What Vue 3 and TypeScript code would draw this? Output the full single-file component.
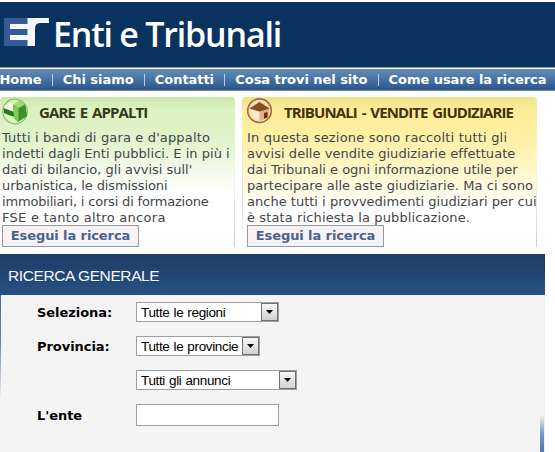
<script setup lang="ts">
interface Line {
  text: string
  tracking: number
}

interface Card {
  kind: 'green' | 'yellow'
  title: string
  lines: Line[]
}

const menu: string[] = ['Home', 'Chi siamo', 'Contatti', 'Cosa trovi nel sito', 'Come usare la ricerca']

const cards: Card[] = [
  {
    kind: 'green',
    title: 'GARE E APPALTI',
    lines: [
      { text: "Tutti i bandi di gara e d'appalto", tracking: 0.15 },
      { text: 'indetti dagli Enti pubblici. E in più i', tracking: 0.03 },
      { text: "dati di bilancio, gli avvisi sull'", tracking: -0.01 },
      { text: 'urbanistica, le dismissioni', tracking: -0.1 },
      { text: 'immobiliari, i corsi di formazione', tracking: -0.18 },
      { text: 'FSE e tanto altro ancora', tracking: 0.28 },
    ],
  },
  {
    kind: 'yellow',
    title: 'TRIBUNALI - VENDITE GIUDIZIARIE',
    lines: [
      { text: 'In questa sezione sono raccolti tutti gli', tracking: 0.2 },
      { text: 'avvisi delle vendite giudiziarie effettuate', tracking: 0.05 },
      { text: 'dai Tribunali e ogni informazione utile per', tracking: 0 },
      { text: 'partecipare alle aste giudiziarie. Ma ci sono', tracking: 0.07 },
      { text: 'anche tutti i provvedimenti giudiziari per cui', tracking: 0.01 },
      { text: 'è stata richiesta la pubblicazione.', tracking: 0.12 },
    ],
  },
]

const fields = [
  { label: 'Seleziona:', value: 'Tutte le regioni', size: 'medium' },
  { label: 'Provincia:', value: 'Tutte le provincie', size: 'small' },
  { label: '', value: 'Tutti gli annunci', size: 'large' },
]
</script>

<template>
  <div class="page">
    <header class="header">
      <svg class="logo" width="46" height="30" viewBox="0 0 46 30">
        <rect x="0" y="0" width="24" height="28" fill="#345b94" />
        <path d="M6 6H23.5V0H45V5H36Q31 5 31 11V28H23.5V22H6V17H23.5V11H6Z" fill="#f3f6fa" />
      </svg>
      <h1 class="brand">Enti e Tribunali</h1>
    </header>

    <nav class="nav">
      <template v-for="(item, i) in menu" :key="item">
        <span v-if="i" class="sep"></span>
        <a class="link">{{ item }}</a>
      </template>
    </nav>

    <section class="cards">
      <article v-for="card in cards" :key="card.title" class="card" :class="card.kind">
        <div class="head">
          <svg v-if="card.kind === 'green'" class="icon" width="27" height="28" viewBox="0 0 27 28">
            <circle cx="13" cy="13.5" r="12.3" fill="#d9f3b8" stroke="#8db779" stroke-width="1.2" />
            <path d="M1.5 10L11 13L14 19L9 18L2 15Z" fill="#267b22" />
            <path d="M3 7L9 5L14 9L12 14L2 10Z" fill="#f1fbdc" />
            <path d="M11 7L17 3L23 6L25 18L16 24L12 20Z" fill="#5eae3d" />
            <path d="M11 7L17 3L23 6L17 10Z" fill="#a1dc75" />
            <path d="M17 10L23 7L25 18L17 23Z" fill="#389129" />
            <path d="M12 8L16 10V23L12 20Z" fill="#83c95a" />
          </svg>
          <svg v-else class="icon" width="27" height="28" viewBox="0 0 27 28">
            <circle cx="12.5" cy="12.7" r="11.8" fill="#f6dfb4" stroke="#a4673b" stroke-width="1.6" />
            <path d="M4 10L13 13V23L4.5 20Z" fill="#f9e8cc" />
            <path d="M12.5 13L22 9.5V19.5L12.5 23Z" fill="#dfb282" />
            <path d="M2.5 10.5L12.5 4L22.8 10.5L12.5 13.6Z" fill="#8d4b21" />
            <path d="M17 15L20.5 14V19.5L17 20.8Z" fill="#6b3011" />
          </svg>
          <h2 class="title">{{ card.title }}</h2>
        </div>
        <p class="text">
          <span
            v-for="line in card.lines"
            :key="line.text"
            class="line"
            :style="{ letterSpacing: line.tracking + 'px' }"
          >{{ line.text }}</span>
        </p>
        <button class="go" type="button">Esegui la ricerca</button>
      </article>
    </section>

    <section class="search">
      <h2 class="bar">RICERCA GENERALE</h2>
      <form class="form">
        <div v-for="field in fields" :key="field.value" class="row">
          <span class="label">{{ field.label }}</span>
          <div class="select" :class="field.size">
            <span class="value">{{ field.value }}</span>
            <span class="arrow">
              <svg width="7" height="4" viewBox="0 0 7 4"><path d="M0 0H7L3.5 4Z" fill="#000" /></svg>
            </span>
          </div>
        </div>
        <div class="row last">
          <label class="label" for="ente">L'ente</label>
          <input id="ente" class="input" type="text" />
        </div>
      </form>
    </section>
  </div>
</template>

<style>
body {
  background: #fff;
  overflow: hidden;
}
</style>

<style scoped>
.page {
  box-sizing: border-box;
  width: 555px;
  height: 452px;
  padding-top: 2px;
  overflow: hidden;
  font-family: "DejaVu Sans", sans-serif;
  font-size: 13px;
}
h1, h2, p {
  margin: 0;
}
.header {
  display: flex;
  height: 65px;
  background: #0a325f;
}
.logo {
  flex: none;
  margin: 16px 0 0 4px;
}
.brand {
  margin: 9px 0 0 3px;
  color: #fff;
  font: 600 34px/46px "Open Sans", sans-serif;
  letter-spacing: -1.2px;
  white-space: nowrap;
}
.nav {
  display: flex;
  align-items: center;
  box-sizing: border-box;
  height: 24px;
  padding-top: 1px;
  border-top: 1px solid #8c9299;
  border-bottom: 1px solid #7b8796;
  background: linear-gradient(#fff 0 1px, #648ab8 1px, #527dac 35%, #2b5489);
}
.link {
  margin-left: -0.5px;
  color: #fff;
  font-weight: bold;
  letter-spacing: -0.05px;
  line-height: 20px;
  white-space: nowrap;
}
.sep {
  width: 1px;
  height: 12px;
  margin: 0 10.4px;
  background: #b9cbe0;
}
.cards {
  display: flex;
  gap: 7px;
  height: 150px;
  padding-top: 6px;
}
.card {
  box-sizing: border-box;
  padding-left: 2px;
  border-radius: 4px 4px 0 0;
  white-space: nowrap;
}
.green {
  width: 235px;
  background:
    linear-gradient(transparent 45%, #c9ced8) right / 1px 100% no-repeat,
    linear-gradient(#c9e8ab, #dcf2c0 8%, #e0f3ca 28%, #f3fae9 48%, #fff 64%);
}
.yellow {
  width: 295px;
  padding-left: 5px;
  background:
    linear-gradient(transparent 45%, #c9ced8) right / 1px 100% no-repeat,
    linear-gradient(transparent 20%, #d4d8e2 70%, transparent) left / 1px 100% no-repeat,
    linear-gradient(#f0e28c, #fdec97 8%, #fff0a4 26%, #fff6c8 48%, #fff 74%);
}
.head {
  display: flex;
  height: 33px;
}
.icon {
  flex: none;
  margin-top: 1px;
}
.title {
  margin: 4px 0 0 10px;
  color: #33391c;
  font: 700 15px/22px "Open Sans", sans-serif;
  letter-spacing: -0.9px;
  word-spacing: 1.8px;
}
.yellow .title {
  color: #42330b;
}
.text {
  height: 95px;
}
.line {
  display: block;
  height: 16px;
  color: #42464b;
  line-height: 16px;
}
.go {
  display: block;
  box-sizing: border-box;
  width: 137px;
  height: 22px;
  padding: 0;
  border: 1px solid #969aa5;
  background: #f8f2f5;
  color: #486493;
  font: bold 13px/20px "DejaVu Sans", sans-serif;
  letter-spacing: -0.1px;
}
.search {
  width: 545px;
  margin-top: 7px;
}
.bar {
  height: 41px;
  padding-left: 8px;
  background: linear-gradient(#203d65, #22426f 35%, #265183);
  color: #f5f8fc;
  font: 400 15.5px/43px "Liberation Sans", sans-serif;
  letter-spacing: -0.4px;
}
.form {
  display: flex;
  flex-direction: column;
  gap: 14px;
  box-sizing: border-box;
  height: 157px;
  padding: 7px 0 0 37px;
  background:
    linear-gradient(#426fa0, #6388b2 45%, transparent) 0 0 / 1px 105px no-repeat,
    linear-gradient(#f4f4f4, #7899c2 50%, #5078b0) 540px 120px / 4px 37px no-repeat,
    #f4f4f4;
}
.row {
  display: flex;
  align-items: center;
  height: 20px;
}
.last {
  height: 22px;
}
.label {
  width: 99px;
  font-weight: bold;
  letter-spacing: -0.05px;
}
.select {
  display: flex;
  justify-content: space-between;
  box-sizing: border-box;
  height: 20px;
  border: 1px solid #9a9fa5;
  background: #fff;
  font: 13.5px/19px "Liberation Sans", sans-serif;
  letter-spacing: -0.35px;
  word-spacing: 0.6px;
  white-space: nowrap;
}
.small {
  width: 124px;
}
.medium {
  width: 143px;
}
.large {
  width: 161px;
}
.value {
  padding-left: 4px;
}
.arrow {
  display: flex;
  flex: none;
  align-items: center;
  justify-content: center;
  box-sizing: border-box;
  width: 17px;
  height: 18px;
  border: 1px solid #6e7175;
  background: linear-gradient(#f7f7f7, #d2d2d2);
}
.input {
  box-sizing: border-box;
  width: 143px;
  height: 22px;
  margin: 0;
  border: 1px solid #9a9fa5;
  background: #fff;
}
</style>
